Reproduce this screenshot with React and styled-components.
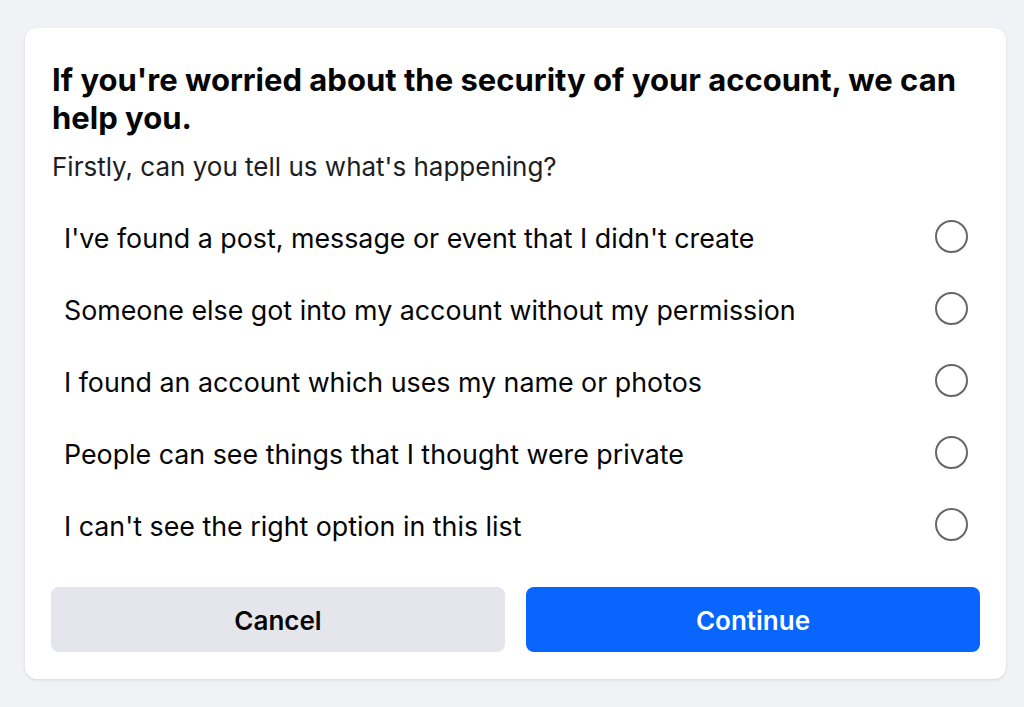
import React, { useState } from 'react';
import styled, { createGlobalStyle } from 'styled-components';

const GlobalStyle = createGlobalStyle`
  html, body {
    margin: 0;
    padding: 0;
    background: #f0f2f5;
    font-family: Inter, "Liberation Sans", Arial, sans-serif;
    color: #050505;
  }
`;

const Page = styled.div`
  padding: 28px 18px 28px 25px;
  min-height: 707px;
  box-sizing: border-box;
`;

const Card = styled.div`
  width: 981px;
  box-sizing: border-box;
  background: #ffffff;
  border-radius: 12px;
  box-shadow: 0 1px 3px rgba(0, 0, 0, 0.12);
  padding: 33px 26px 27px 26px;
`;

const Title = styled.h2`
  margin: 0 0 0 1px;
  font-size: 31px;
  line-height: 38px;
  font-weight: 700;
`;

const Subtitle = styled.p`
  margin: 14px 0 0 1px;
  font-size: 26px;
  line-height: 32px;
  color: #1c1e21;
`;

const OptionList = styled.div`
  margin-top: 19px;
  display: flex;
  flex-direction: column;
`;

const OptionRow = styled.label`
  height: 72px;
  padding: 0 12px 0 13px;
  display: flex;
  align-items: center;
  justify-content: space-between;
  cursor: pointer;
  border-radius: 8px;
`;

const OptionText = styled.span`
  font-size: 26.8px;
  line-height: 32px;
  color: #050505;
`;

const Radio = styled.span`
  width: 33px;
  height: 33px;
  box-sizing: border-box;
  border-radius: 50%;
  border: 2px solid ${(p) => (p.$checked ? '#0866ff' : '#65676b')};
  display: flex;
  align-items: center;
  justify-content: center;
  margin-top: -3px;

  &::after {
    content: '';
    width: 17px;
    height: 17px;
    border-radius: 50%;
    background: #0866ff;
    display: ${(p) => (p.$checked ? 'block' : 'none')};
  }
`;

const ButtonRow = styled.div`
  margin-top: 25px;
  display: grid;
  grid-template-columns: 1fr 1fr;
  gap: 21px;
`;

const Button = styled.button`
  height: 65px;
  padding: 2px 0 0;
  border: none;
  border-radius: 8px;
  font-family: inherit;
  font-size: 26px;
  font-weight: 600;
  background: ${(p) => (p.$primary ? '#0866ff' : '#e4e6eb')};
  color: ${(p) => (p.$primary ? '#ffffff' : '#050505')};
  cursor: pointer;
`;

const options = [
  "I've found a post, message or event that I didn't create",
  'Someone else got into my account without my permission',
  'I found an account which uses my name or photos',
  'People can see things that I thought were private',
  "I can't see the right option in this list",
];

const App = () => {
  const [selected, setSelected] = useState(null);

  return (
    <Page>
      <GlobalStyle />
      <Card>
        <Title>If you're worried about the security of your account, we can help you.</Title>
        <Subtitle>Firstly, can you tell us what's happening?</Subtitle>
        <OptionList>
          {options.map((text, index) => (
            <OptionRow key={index} onClick={() => setSelected(index)}>
              <OptionText>{text}</OptionText>
              <Radio $checked={selected === index} />
            </OptionRow>
          ))}
        </OptionList>
        <ButtonRow>
          <Button>Cancel</Button>
          <Button $primary>Continue</Button>
        </ButtonRow>
      </Card>
    </Page>
  );
};

export default App;
